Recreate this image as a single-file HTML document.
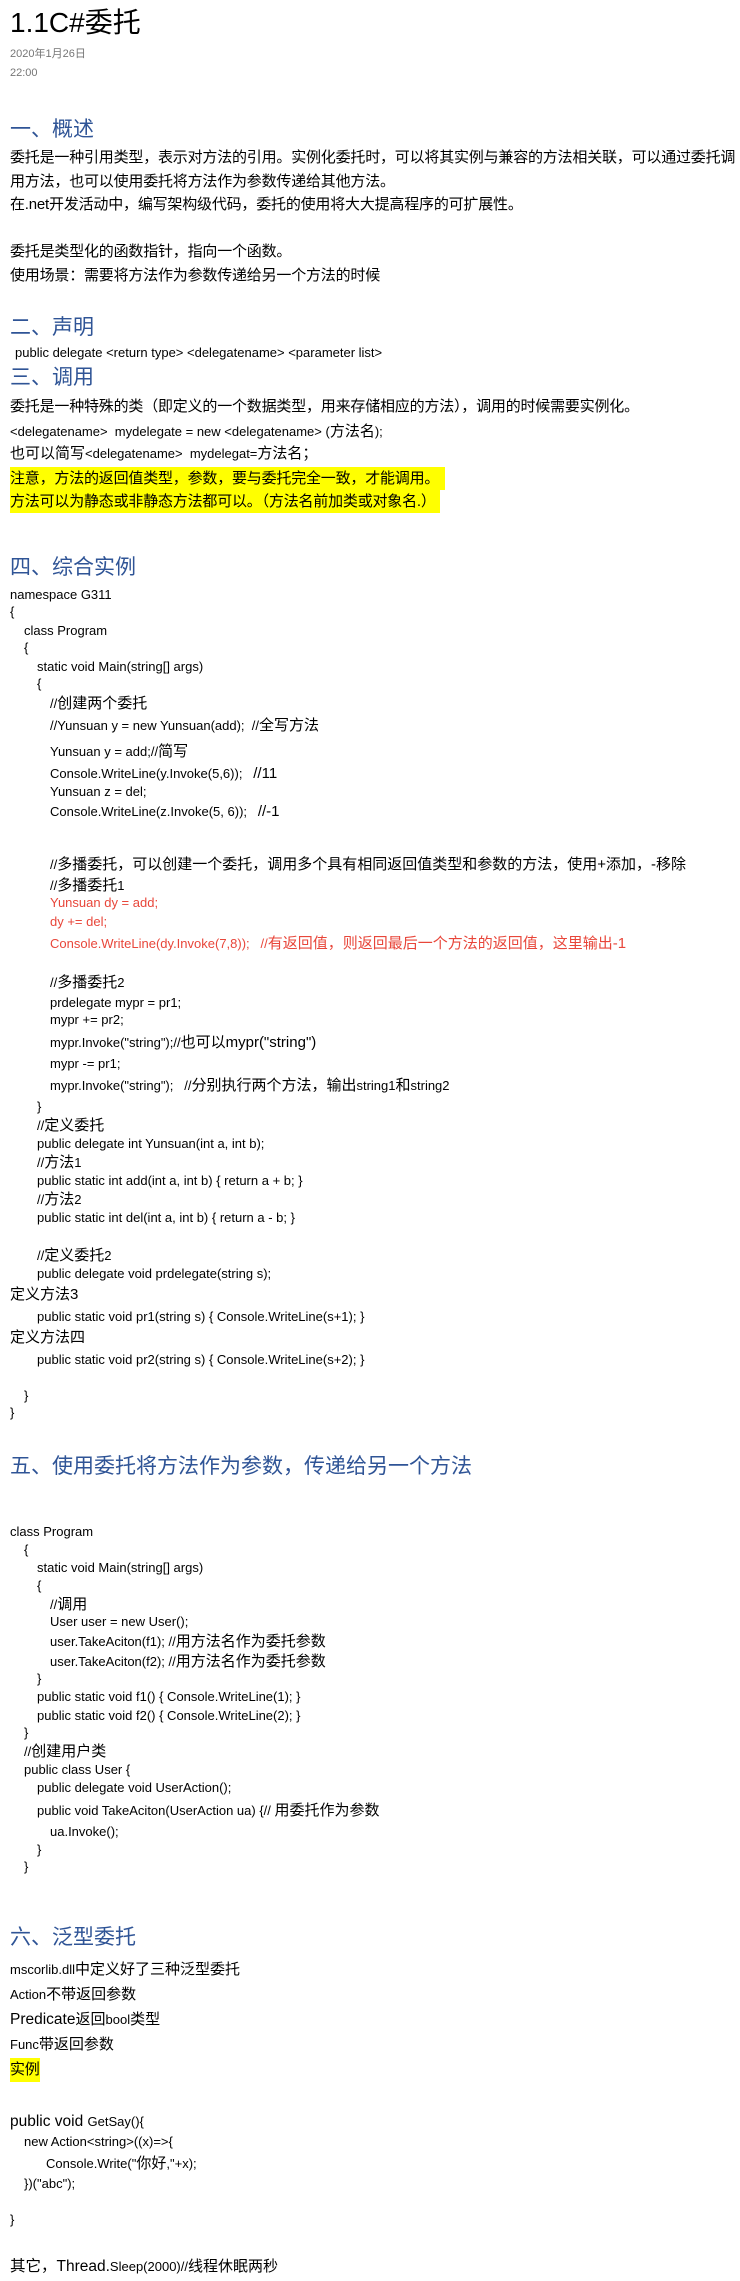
<!DOCTYPE html>
<html><head><meta charset="utf-8">
<style>
html,body{margin:0;padding:0;background:#fff;}
body{width:740px;height:2281px;position:relative;overflow:hidden;font-family:"Liberation Sans","Noto Sans CJK SC",sans-serif;color:#000;}
.l{position:absolute;white-space:pre;line-height:20px;font-size:13px;}
.b{font-size:15px;letter-spacing:-0.2px;}
.c{font-size:15px;}
.h{font-size:21px;color:#2f5496;line-height:28px;}
.r{color:#e8463a;}
.y{background:#ffff00;}
</style></head><body>
<div class="l" style="left:10px;top:5px;font-size:28px;line-height:36px;">1.1C#委托</div>
<div class="l" style="left:10px;top:44px;font-size:11px;color:#767676;">2020年1月26日</div>
<div class="l" style="left:10px;top:63px;font-size:11px;color:#767676;">22:00</div>

<div class="l h" style="left:10px;top:116px;">一、概述</div>
<div class="l b" style="left:10px;top:148px;">委托是一种引用类型，表示对方法的引用。实例化委托时，可以将其实例与兼容的方法相关联，可以通过委托调</div>
<div class="l b" style="left:10px;top:172px;">用方法，也可以使用委托将方法作为参数传递给其他方法。</div>
<div class="l b" style="left:10px;top:195px;">在.net开发活动中，编写架构级代码，委托的使用将大大提高程序的可扩展性。</div>
<div class="l b" style="left:10px;top:242px;">委托是类型化的函数指针，指向一个函数。</div>
<div class="l b" style="left:10px;top:266px;">使用场景：需要将方法作为参数传递给另一个方法的时候</div>

<div class="l h" style="left:10px;top:314px;">二、声明</div>
<div class="l" style="left:15px;top:343px;">public delegate &lt;return type&gt; &lt;delegatename&gt; &lt;parameter list&gt;</div>
<div class="l h" style="left:10px;top:364px;">三、调用</div>
<div class="l b" style="left:10px;top:397px;">委托是一种特殊的类（即定义的一个数据类型，用来存储相应的方法），调用的时候需要实例化。</div>
<div class="l" style="left:10px;top:422px;">&lt;delegatename&gt;  mydelegate = new &lt;delegatename&gt; (<span class="c">方法名</span>);</div>
<div class="l" style="left:10px;top:444px;"><span class="c">也可以简写</span>&lt;delegatename&gt;  mydelegat=<span class="c">方法名；</span></div>
<div class="l b y" style="left:10px;top:467px;height:23px;line-height:23px;padding-right:6px;">注意，方法的返回值类型，参数，要与委托完全一致，才能调用。</div>
<div class="l b y" style="left:10px;top:490px;height:23px;line-height:23px;padding-right:4px;">方法可以为静态或非静态方法都可以。（方法名前加类或对象名.）</div>

<div class="l h" style="left:10px;top:554px;">四、综合实例</div>
<div class="l" style="left:10px;top:585px;">namespace G311</div>
<div class="l" style="left:10px;top:602px;">{</div>
<div class="l" style="left:24px;top:621px;">class Program</div>
<div class="l" style="left:24px;top:638px;">{</div>
<div class="l" style="left:37px;top:657px;">static void Main(string[] args)</div>
<div class="l" style="left:37px;top:674px;">{</div>
<div class="l" style="left:50px;top:694px;">//<span class="c">创建两个委托</span></div>
<div class="l" style="left:50px;top:716px;">//Yunsuan y = new Yunsuan(add);  //<span class="c">全写方法</span></div>
<div class="l" style="left:50px;top:742px;">Yunsuan y = add;//<span class="c">简写</span></div>
<div class="l" style="left:50px;top:764px;">Console.WriteLine(y.Invoke(5,6));   <span class="c">//11</span></div>
<div class="l" style="left:50px;top:782px;">Yunsuan z = del;</div>
<div class="l" style="left:50px;top:802px;">Console.WriteLine(z.Invoke(5, 6));   <span class="c">//-1</span></div>
<div class="l" style="left:50px;top:855px;">//<span class="c">多播委托，可以创建一个委托，调用多个具有相同返回值类型和参数的方法，使用+添加，-移除</span></div>
<div class="l" style="left:50px;top:876px;">//<span class="c">多播委托</span>1</div>
<div class="l r" style="left:50px;top:893px;">Yunsuan dy = add;</div>
<div class="l r" style="left:50px;top:912px;">dy += del;</div>
<div class="l r" style="left:50px;top:934px;">Console.WriteLine(dy.Invoke(7,8));   //<span class="c">有返回值，则返回最后一个方法的返回值，这里输出-1</span></div>
<div class="l" style="left:50px;top:973px;">//<span class="c">多播委托</span>2</div>
<div class="l" style="left:50px;top:993px;">prdelegate mypr = pr1;</div>
<div class="l" style="left:50px;top:1010px;">mypr += pr2;</div>
<div class="l" style="left:50px;top:1033px;">mypr.Invoke("string");//<span class="c">也可以mypr("string")</span></div>
<div class="l" style="left:50px;top:1054px;">mypr -= pr1;</div>
<div class="l" style="left:50px;top:1076px;">mypr.Invoke("string");   //<span class="c">分别执行两个方法，输出</span>string1<span class="c">和</span>string2</div>
<div class="l" style="left:37px;top:1097px;">}</div>
<div class="l" style="left:37px;top:1116px;">//<span class="c">定义委托</span></div>
<div class="l" style="left:37px;top:1134px;">public delegate int Yunsuan(int a, int b);</div>
<div class="l" style="left:37px;top:1153px;">//<span class="c">方法</span>1</div>
<div class="l" style="left:37px;top:1171px;">public static int add(int a, int b) { return a + b; }</div>
<div class="l" style="left:37px;top:1190px;">//<span class="c">方法</span>2</div>
<div class="l" style="left:37px;top:1208px;">public static int del(int a, int b) { return a - b; }</div>
<div class="l" style="left:37px;top:1246px;">//<span class="c">定义委托</span>2</div>
<div class="l" style="left:37px;top:1264px;">public delegate void prdelegate(string s);</div>
<div class="l c" style="left:10px;top:1285px;">定义方法3</div>
<div class="l" style="left:37px;top:1307px;">public static void pr1(string s) { Console.WriteLine(s+1); }</div>
<div class="l c" style="left:10px;top:1328px;">定义方法四</div>
<div class="l" style="left:37px;top:1350px;">public static void pr2(string s) { Console.WriteLine(s+2); }</div>
<div class="l" style="left:24px;top:1386px;">}</div>
<div class="l" style="left:10px;top:1403px;">}</div>

<div class="l h" style="left:10px;top:1453px;">五、使用委托将方法作为参数，传递给另一个方法</div>
<div class="l" style="left:10px;top:1522px;">class Program</div>
<div class="l" style="left:24px;top:1540px;">{</div>
<div class="l" style="left:37px;top:1558px;">static void Main(string[] args)</div>
<div class="l" style="left:37px;top:1576px;">{</div>
<div class="l" style="left:50px;top:1595px;">//<span class="c">调用</span></div>
<div class="l" style="left:50px;top:1612px;">User user = new User();</div>
<div class="l" style="left:50px;top:1632px;">user.TakeAciton(f1); //<span class="c">用方法名作为委托参数</span></div>
<div class="l" style="left:50px;top:1652px;">user.TakeAciton(f2); //<span class="c">用方法名作为委托参数</span></div>
<div class="l" style="left:37px;top:1669px;">}</div>
<div class="l" style="left:37px;top:1687px;">public static void f1() { Console.WriteLine(1); }</div>
<div class="l" style="left:37px;top:1706px;">public static void f2() { Console.WriteLine(2); }</div>
<div class="l" style="left:24px;top:1723px;">}</div>
<div class="l" style="left:24px;top:1742px;">//<span class="c">创建用户类</span></div>
<div class="l" style="left:24px;top:1760px;">public class User {</div>
<div class="l" style="left:37px;top:1778px;">public delegate void UserAction();</div>
<div class="l" style="left:37px;top:1801px;">public void TakeAciton(UserAction ua) {// <span class="c">用委托作为参数</span></div>
<div class="l" style="left:50px;top:1822px;">ua.Invoke();</div>
<div class="l" style="left:37px;top:1840px;">}</div>
<div class="l" style="left:24px;top:1857px;">}</div>

<div class="l h" style="left:10px;top:1924px;">六、泛型委托</div>
<div class="l" style="left:10px;top:1960px;">mscorlib.dll<span class="c">中定义好了三种泛型委托</span></div>
<div class="l" style="left:10px;top:1985px;">Action<span class="c">不带返回参数</span></div>
<div class="l" style="left:10px;top:2010px;font-size:15.5px;">Predicate<span class="c">返回</span><span style="font-size:13px">bool</span><span class="c">类型</span></div>
<div class="l" style="left:10px;top:2035px;">Func<span class="c">带返回参数</span></div>
<div class="l b y" style="left:10px;top:2058px;height:24px;line-height:24px;">实例</div>
<div class="l" style="left:10px;top:2112px;font-size:15.5px;">public void <span style="font-size:13px">GetSay(){</span></div>
<div class="l" style="left:24px;top:2132px;">new Action&lt;string&gt;((x)=&gt;{</div>
<div class="l" style="left:46px;top:2154px;">Console.Write("<span class="c">你好</span>,"+x);</div>
<div class="l" style="left:24px;top:2174px;">})("abc");</div>
<div class="l" style="left:10px;top:2210px;">}</div>
<div class="l" style="left:10px;top:2257px;font-size:15.5px;">其它，Thread.<span style="font-size:13px">Sleep(2000)//</span><span class="c">线程休眠两秒</span></div>
</body></html>
